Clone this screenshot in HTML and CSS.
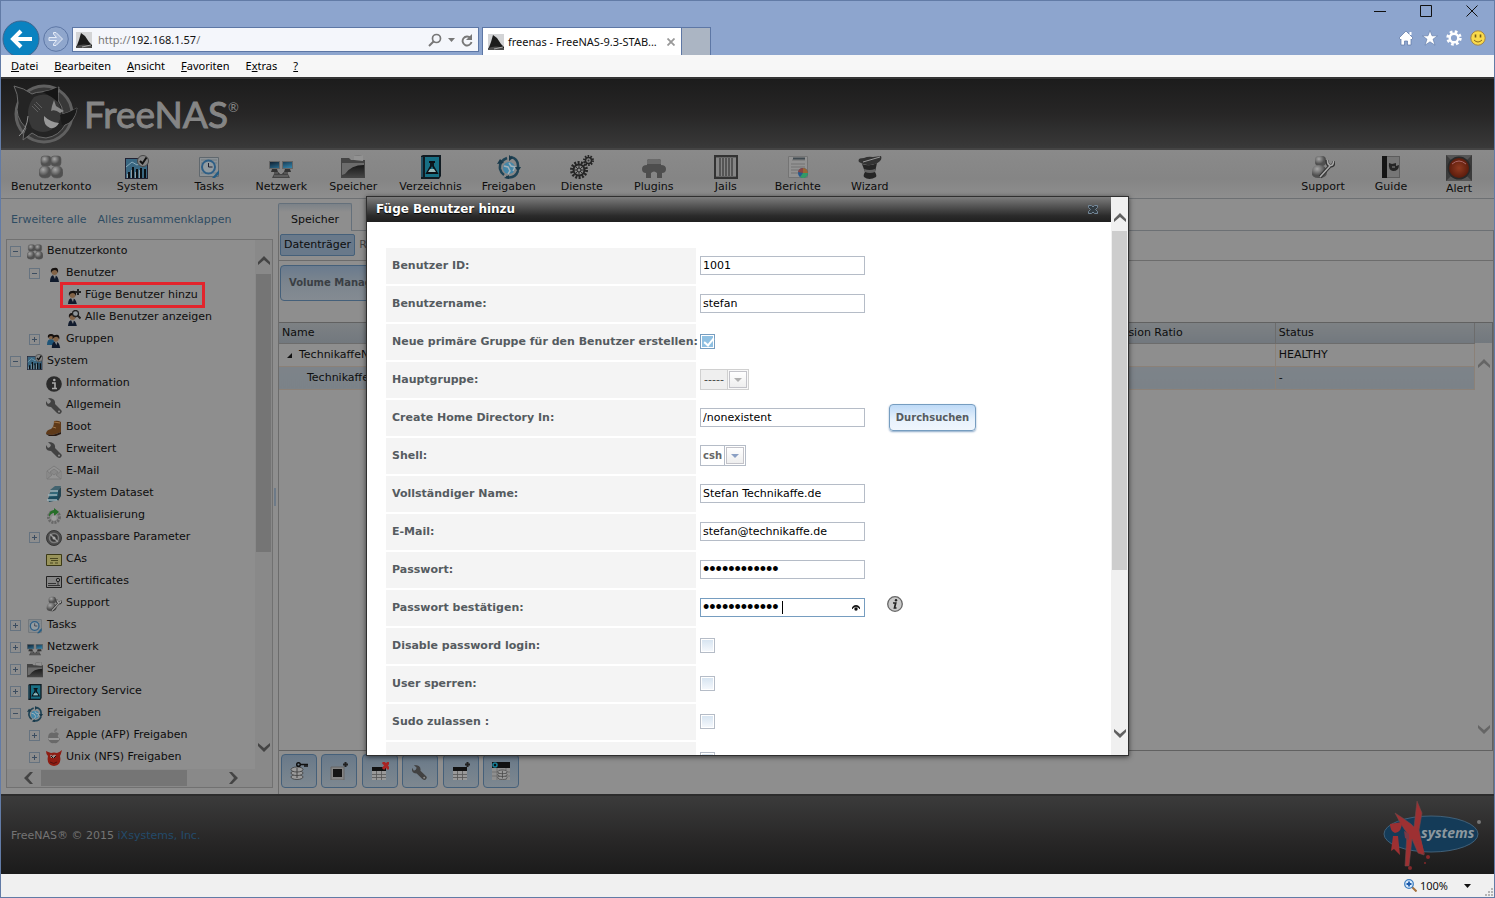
FILE: index.html
```html
<!DOCTYPE html>
<html lang="de">
<head>
	<meta charset="utf-8">
	<title>freenas - FreeNAS-9.3-STABLE</title>
	<link rel="stylesheet" href="styles.css">
</head>
<body>
	<!-- icons -->
	<svg class="defs" width="0" height="0">
		<defs>
			<linearGradient id="gGrey" x1="0" y1="0" x2="1" y2="1"><stop offset="0" stop-color="#a0a0a0"/><stop offset="1" stop-color="#333"/></linearGradient>
			<linearGradient id="gBlue" x1="0" y1="0" x2="1" y2="1"><stop offset="0" stop-color="#123"/><stop offset="1" stop-color="#3385ad"/></linearGradient>
			<linearGradient id="gFolder" x1="0" y1="0" x2="0" y2="1"><stop offset="0" stop-color="#111"/><stop offset="1" stop-color="#444"/></linearGradient>
			<radialGradient id="gLamp"><stop offset="0" stop-color="#8f3a20"/><stop offset="1" stop-color="#5c1c0c"/></radialGradient>
			<radialGradient id="gBody" cx=".35" cy=".3"><stop offset="0" stop-color="#a6a6a6"/><stop offset="1" stop-color="#505050"/></radialGradient>
		</defs>
		<symbol id="i-users" viewBox="0 0 24 24">
			<g fill="url(#gBody)" stroke="#555" stroke-width=".6">
				<rect x="2" y="1" width="10" height="10" rx="3"/><rect x="12" y="1" width="10" height="10" rx="3"/>
				<path d="M0 18q0-7 6-7t6 7q0 5-6 5t-6-5z"/><path d="M12 18q0-7 6-7t6 7q0 5-6 5t-6-5z"/>
			</g>
		</symbol>
		<symbol id="i-system" viewBox="0 0 24 24">
			<rect x=".5" y="3.5" width="22" height="20" fill="#3a6781" stroke="#223"/>
			<path d="M1 12l6-5 5 3 9-5" stroke="#8ab" fill="none"/>
			<path d="M3 23v-6h2v6zM7 23V12h2v11zM11 23v-9h2v9zM15 23V13h2v10zM19 23v-9h2v9z" fill="#0a0f14"/>
			<path d="M2 23v-4h1v4zM6 23v-8h1v8zM10 23v-6h1v6zM14 23v-8h1v8z" fill="#8d9da5"/>
			<circle cx="18" cy="6" r="5.500" fill="#858585" stroke="#484848"/>
			<path d="M15 6l2.500 2.500 4-6" stroke="#111" stroke-width="2" fill="none"/>
		</symbol>
		<symbol id="i-tasks" viewBox="0 0 24 24">
			<path d="M2.500 2.500h19v19h-19z" fill="#8c9296" stroke="#60686e"/>
			<path d="M4 5h16M4 8h16M4 18h16" stroke="#707a80"/>
			<circle cx="11.500" cy="12" r="6.500" fill="#929ba0" stroke="#2f5f86" stroke-width="2"/>
			<path d="M11.500 8v4h4" stroke="#223" fill="none"/>
			<path d="M15 23l7-8v4l-4 4z" fill="#245d85"/>
		</symbol>
		<symbol id="i-net" viewBox="0 0 24 24">
			<path d="M0 6h11v8H0zM13 6h11v8H13z" fill="#666"/>
			<path d="M1 7h9v6H1zM14 7h9v6h-9z" fill="url(#gBlue)"/>
			<path d="M3 14h5l1 3H2zM16 14h5l1 3h-7z" fill="#333"/>
			<path d="M5 18h5v2M19 18h-5v2" stroke="#222" fill="none"/>
			<path d="M5 19h14l2 4H3z" fill="#444"/><path d="M5 21h14" stroke="#777"/>
		</symbol>
		<symbol id="i-folder" viewBox="0 0 24 24">
			<path d="M0 23V3h8l2 2h3V1l9-1v5h2v18z" fill="#444"/>
			<path d="M13 5V1l9-1v6z" fill="#929292"/>
			<path d="M1 22V8h22v14z" fill="url(#gFolder)"/>
			<path d="M1 20V8h22v2Q10 10 4 19z" fill="#6c6c6c"/>
		</symbol>
		<symbol id="i-book" viewBox="0 0 24 24">
			<path d="M2 1l2-1h18v21l-2 3H2z" fill="#111b22"/>
			<path d="M6 2h14v20H6z" fill="#176f84"/><path d="M3 2v20" stroke="#286176" stroke-width="1.500"/>
			<path d="M10 7h6M12 7v4l-4 7h10l-4-7V7" fill="none" stroke="#0c1117" stroke-width="1.800"/>
			<path d="M11 14h4l2 3H9z" fill="#9bb"/>
		</symbol>
		<symbol id="i-share" viewBox="0 0 24 24">
			<circle cx="12" cy="13" r="6" fill="#4386a8"/><path d="M7 11l4 1 2 4-2 3M12 8l2 3 4 1-2 4" stroke="#a1b1b9" stroke-width="1.500" fill="none"/>
			<path d="M10 3Q2 6 3 14q1 4 4 6M14 2q8 2 7 11M9 22q9 2 12-6" fill="none" stroke="#1f4355" stroke-width="2.500"/>
			<path d="M0 9l3-5 4 4zM12 0v6l4-3zM18 12h6l-3 5zM7 23l5-3v4z" fill="#18394a"/>
		</symbol>
		<symbol id="i-gears" viewBox="0 0 24 24">
			<circle cx="9" cy="15" r="7.500" fill="none" stroke="#252525" stroke-width="3" stroke-dasharray="2 1.370"/>
			<circle cx="9" cy="15" r="5.500" fill="none" stroke="#252525" stroke-width="2"/>
			<path d="M9 10v10M4 15h10M5.500 11.500l7 7M12.500 11.500l-7 7" stroke="#303030"/><circle cx="9" cy="15" r="2" fill="#8b8b8b" stroke="#222"/>
			<circle cx="18.500" cy="5.500" r="4.300" fill="none" stroke="#252525" stroke-width="2.400" stroke-dasharray="1.500 1.200"/>
			<circle cx="18.500" cy="5.500" r="3" fill="none" stroke="#252525" stroke-width="1.500"/><circle cx="18.500" cy="5.500" r="1" fill="#333"/>
		</symbol>
		<symbol id="i-plugin" viewBox="0 0 24 24">
			<path d="M5 10V6q0-2 3-2h8q3 0 3 2v4q5 0 5 4t-4 4v5h-5v-5q-3-3-6 0v5H4v-5q-4 0-4-4t5-4z" fill="#4e4e4e"/>
			<path d="M5 6q0-2 3-2h8q3 0 3 2v3H5z" fill="#6a6a6a"/>
		</symbol>
		<symbol id="i-jail" viewBox="0 0 24 24">
			<path d="M1 1h22v22H1z" fill="#858585" stroke="#333" stroke-width="2"/>
			<path d="M6 3v18M9 3v18M12 3v18M15 3v18M18 3v18" stroke="#3c3c3c" stroke-width="1.300"/><path d="M2 2.500h20M2 21.500h20" stroke="#666"/>
		</symbol>
		<symbol id="i-report" viewBox="0 0 24 24">
			<path d="M2.500 1.500h19v21h-19z" fill="#929292" stroke="#747474"/>
			<path d="M6 5h13M5 9h14M5 12h14M5 15h8M5 18h7" stroke="#727272"/><path d="M7 3.500h12" stroke="#404a50" stroke-width="2"/>
			<circle cx="17" cy="18" r="5" fill="#27598c"/><path d="M17 18v-5a5 5 0 0 1 5 5z" fill="#963"/><path d="M17 18h5a5 5 0 0 1-8 4z" fill="#396"/><path d="M17 18l-5-1a5 5 0 0 1 5-4z" fill="#844"/>
		</symbol>
		<symbol id="i-hat" viewBox="0 0 24 24">
			<path d="M4 9q8 3 15-1l-2 9q2 3 1 5-7 4-12 0-1-2 1-5z" fill="#252525"/>
			<path d="M6 14q6 2 11 0v3q-5 2-10 0z" fill="#646464"/>
			<path d="M1 7q-2-4 5-4 4-2 9-1l8-1q2 5-6 8-9 3-16-2z" fill="#333"/><path d="M5 7L22 2" stroke="#999"/>
		</symbol>
		<symbol id="i-support" viewBox="0 0 24 24">
			<rect x="4" y="1" width="11" height="10" rx="4" fill="url(#gBody)"/><path d="M1 17q0-7 7-7t8 7q0 6-8 6t-7-6z" fill="url(#gBody)"/>
			<path d="M9 22l10-11M16 5q0 5 3 6 4 0 4-5" stroke="#333" stroke-width="3.500" fill="none"/><path d="M9 22l10-11M16.500 5q0 5 3 5.500 3 0 3-4.500" stroke="#aaa" stroke-width="1.600" fill="none"/>
		</symbol>
		<symbol id="i-guide" viewBox="0 0 24 24">
			<path d="M3 1h18v22H3z" fill="#5c5c5c"/><path d="M3 1h5v22H3z" fill="#151515"/><path d="M8 2h12v20H8z" fill="#767676"/>
			<path d="M10 8l3 1 4-1v3l3-1q0 6-6 6-5-1-4-8z" fill="#252525"/><path d="M13 12h3" stroke="#888"/>
		</symbol>
		<symbol id="i-alert" viewBox="0 0 26 26">
			<path d="M0 0h26v26H0z" fill="#3b3b3b"/><path d="M0 0l13 13L26 0zM0 26l13-13 13 13z" fill="#555"/>
			<circle cx="13" cy="13" r="11.500" fill="#292929"/><circle cx="13" cy="13" r="10" fill="url(#gLamp)"/><path d="M6 9q7-6 14 0" stroke="#a66" fill="none"/>
		</symbol>
		<symbol id="i-user" viewBox="0 0 16 16">
			<path d="M4 16q0-7 4-7t5 7z" fill="#101a2c"/><path d="M7 9h3l-1 4z" fill="#888"/><circle cx="8.500" cy="6" r="3" fill="#826347"/><path d="M5 7q-1-5 3-5 5-1 4 5-1-3-3-3Q6 4 5 7z" fill="#15100e"/>
		</symbol>
		<symbol id="i-user-add" viewBox="0 0 16 16">
			<use href="#i-user" x="-1" y="1" width="16" height="16"/><path d="M13 1v6M10 4h6" stroke="#222" stroke-width="2"/>
		</symbol>
		<symbol id="i-user-find" viewBox="0 0 16 16">
			<use href="#i-user" x="-1" y="1" width="16" height="16"/><circle cx="10.500" cy="3.500" r="3" fill="#8d9499" stroke="#222" stroke-width="1.300"/><path d="M12.500 5.500l3 3" stroke="#222" stroke-width="2"/>
		</symbol>
		<symbol id="i-group" viewBox="0 0 16 16">
			<path d="M1 13q0-6 4-6t4 6z" fill="#1f5578"/><circle cx="5" cy="5" r="2.500" fill="#826347"/><path d="M2 6q-1-4 3-4t3 4Q5 2 2 6z" fill="#15100e"/>
			<use href="#i-user" x="2" y="1" width="15" height="15"/>
		</symbol>
		<symbol id="i-info" viewBox="0 0 16 16">
			<circle cx="8" cy="8" r="7.800" fill="#2b2b2b"/><path d="M6 7h3v5M6 12.500h5" stroke="#aaa" stroke-width="1.600" fill="none"/><circle cx="8.300" cy="4" r="1.300" fill="#aaa"/>
		</symbol>
		<symbol id="i-wrench" viewBox="0 0 16 16">
			<path d="M2 0l3 3-1 2-2 1-2-3q-1 6 5 6l6 6q3 2 4 0 2-2-1-4L9 6q1-6-7-6z" fill="#424242"/><circle cx="13" cy="13.500" r="1" fill="#909090"/>
		</symbol>
		<symbol id="i-boot" viewBox="0 0 16 16">
			<path d="M8 1q4-1 7 1v10l-5 2-4 1-6-1q0-4 5-5 3-2 3-8z" fill="#5f3a19"/><path d="M0 14l6 1 4-1 5-2v2l-5 2H3z" fill="#271810"/><path d="M8 2l6 1M7 7l3 1" stroke="#a17749"/>
		</symbol>
		<symbol id="i-mail" viewBox="0 0 16 16">
			<path d="M1 7l7-5 7 5v8H1z" fill="#939393" stroke="#7c7c7c"/><path d="M1 7l5 4-5 4M15 7l-5 4 5 4M4 8l4-3 4 3-4 3z" fill="#898989" stroke="#7c7c7c"/>
		</symbol>
		<symbol id="i-dataset" viewBox="0 0 16 16">
			<path d="M2 12l4-3h9l-3 5-9 2z" fill="#1c4b5d"/><path d="M3 8l4-3h8l-3 5-9 1z" fill="#31687a"/><path d="M4 4l5-4h6l-2 5-9 2z" fill="#42636f"/><path d="M1 14h10M2 9h9M4 5h8" stroke="#9cb3bb" stroke-width="1.400"/><path d="M12 15V5l3-4v9z" fill="#244451"/>
		</symbol>
		<symbol id="i-update" viewBox="0 0 16 16">
			<circle cx="8" cy="9" r="5.500" fill="#8e8e8e" stroke="#686868" stroke-width="3" stroke-dasharray="2 1"/><path d="M3 9q-1-6 5-7V0l5 4-5 4V5q-3 0-5 4z" fill="#286f2a"/><circle cx="8" cy="10" r="2.500" fill="#a0a0a0"/>
		</symbol>
		<symbol id="i-dial" viewBox="0 0 16 16">
			<circle cx="8" cy="8" r="7.500" fill="#4c4c4c" stroke="#373737"/><circle cx="8" cy="8" r="4.500" fill="#383838" stroke="#7a7a7a" stroke-width="1.500"/><path d="M4 4l8 8" stroke="#999" stroke-width="1.500"/><circle cx="8" cy="8" r="1.500" fill="#aaa"/>
		</symbol>
		<symbol id="i-ca" viewBox="0 0 16 16"><path d="M.5 2.500h15v11H.5z" fill="#98935a" stroke="#3b3916"/><path d="M4 6.500h8M5 8.500h7M4 11h3M9 11h3" stroke="#484620"/></symbol>
		<symbol id="i-cert" viewBox="0 0 16 16"><path d="M.5 2.500h15v11H.5z" fill="#858585" stroke="#222"/><circle cx="12" cy="6" r="1.700" fill="none" stroke="#222"/><path d="M2 9.500h8M12 8v3M2 11.500h12" stroke="#333"/></symbol>
		<symbol id="i-apple" viewBox="0 0 16 16"><path d="M8 5q3-2 5 1-3 2 1 5-2 5-6 4-4 1-6-4 0-8 6-6z" fill="#696969"/><path d="M8 4q0-3 3-4 1 3-3 4z" fill="#747474"/><path d="M2 10h11v2H3z" fill="#999"/></symbol>
		<symbol id="i-devil" viewBox="0 0 16 16"><path d="M0 1q2 1 5 2 3-1 6 0 3-1 5-3-1 4-2 6 2 9-6 10-8-1-6-10Q0 4 0 1z" fill="#8e1c12"/><path d="M4 5q2-1 2 1 2-2 4-1l-1 3H5z" fill="#a08a85"/><path d="M5 6l2 2M10 6L8 8" stroke="#111"/><path d="M4 12q4 3 7 0" stroke="#511" fill="none"/></symbol>
		<symbol id="i-fin" viewBox="0 0 16 16"><path d="M0 0h16v16H0z" fill="#d3d4d6"/><path d="M5 1l4 3 4 6 3 3v3H0l3-8z" fill="#1c1c1c"/><path d="M0 14q8-3 16 0v2H0z" fill="#4d4d4d"/><path d="M6 15l9-2" stroke="#aaa"/></symbol>
		<symbol id="i-up" viewBox="0 0 12 10"><path d="M0 9V6l6-6 6 6v3L6 4z" fill="currentColor"/></symbol>
		<symbol id="i-down" viewBox="0 0 12 10"><path d="M0 1v3l6 6 6-6V1L6 6z" fill="currentColor"/></symbol>
		<symbol id="i-left" viewBox="0 0 10 12"><path d="M9 0H6L0 6l6 6h3L4 6z" fill="currentColor"/></symbol>
		<symbol id="i-right" viewBox="0 0 10 12"><path d="M1 0h3l6 6-6 6H1l5-6z" fill="currentColor"/></symbol>
		<symbol id="i-disks" viewBox="0 0 18 18">
			<g fill="#9a9a9a" stroke="#3c3c3c" stroke-width=".8"><ellipse cx="7" cy="15" rx="6" ry="2.500"/><ellipse cx="7" cy="11" rx="6" ry="2.500"/><ellipse cx="7" cy="7.500" rx="6" ry="2.500"/></g><path d="M7 6v10" stroke="#444"/>
		</symbol>
		<symbol id="i-grid" viewBox="0 0 18 18"><path d="M1 5h14v4H1z" fill="#111"/><path d="M1 9h14v9H1z" fill="#999"/><path d="M1 12.500h14M1 15.500h14M5.500 9v9M10.500 9v9" stroke="#555" stroke-width=".8"/></symbol>
	</svg>

	<!-- browser window -->
	<header class="titlebar">
		<button class="back" aria-label="Zurück"><svg viewBox="0 0 38 38" width="38" height="38"><circle cx="19" cy="19" r="18" fill="#0a82c0" stroke="#3e6590"/><path d="M30 19H12M19 11l-8 8 8 8" stroke="#fff" stroke-width="4" fill="none"/></svg></button>
		<button class="forward" aria-label="Vorwärts"><svg viewBox="0 0 26 26" width="26" height="26"><circle cx="13" cy="13" r="12.300" fill="#8fa6cc" stroke="#5d77a5"/><path d="M6 11.500h7.500L10.500 8V6.500H13l6.500 6.500-6.500 6.500h-2.500V18l3-3.500H6z" fill="#a9bbdb" stroke="#e5ecf7"/></svg></button>
		<div class="address">
			<svg class="fin" width="16" height="16"><use href="#i-fin"/></svg>
			<div class="url">http://<b>192.168.1.57</b>/</div>
			<button aria-label="Suchen"><svg viewBox="0 0 14 14" width="14" height="14"><circle cx="8.500" cy="5.500" r="4" fill="none" stroke="#777" stroke-width="1.700"/><path d="M5.500 8.500L1 13" stroke="#777" stroke-width="2"/></svg></button>
			<svg viewBox="0 0 7 4" width="7" height="4"><path d="M0 0h7L3.500 4z" fill="#777"/></svg>
			<button aria-label="Aktualisieren"><svg viewBox="0 0 12 14" width="12" height="14"><path d="M9.500 5A4.500 4.500 0 1 0 10.500 9" fill="none" stroke="#777" stroke-width="1.900"/><path d="M11 1v6H5z" fill="#777"/></svg></button>
		</div>
		<div class="tab">
			<svg class="fin" width="16" height="16"><use href="#i-fin"/></svg>
			<span>freenas - FreeNAS-9.3-STAB...</span>
			<button aria-label="Tab schließen"><svg viewBox="0 0 8 8" width="8" height="8"><path d="M.5.5l7 7M7.500.5l-7 7" stroke="#999" stroke-width="1.800"/></svg></button>
		</div>
		<button class="newtab" aria-label="Neuer Tab"></button>
		<div class="window-side">
			<div class="window-buttons">
				<button aria-label="Minimieren"><svg width="12" height="12"><path d="M0 6.500h12" stroke="#111"/></svg></button>
				<button aria-label="Maximieren"><svg width="12" height="12"><path d="M.5.5h11v11H.5z" stroke="#111" fill="none"/></svg></button>
				<button aria-label="Schließen"><svg width="12" height="12"><path d="M.5.5l11 11M11.500.5l-11 11" stroke="#111"/></svg></button>
			</div>
			<div class="window-tools">
				<button aria-label="Startseite"><svg viewBox="0 0 16 16" width="16" height="16"><path d="M8 1l7 7-1.500 1.500L13 9v6H9.500v-4h-3v4H3V9l-.5.500L1 8z" fill="#fff" stroke="#5d77a5" stroke-width=".7"/><path d="M12.500 2v3" stroke="#fff" stroke-width="2"/></svg></button>
				<button aria-label="Favoriten"><svg viewBox="0 0 16 16" width="16" height="16"><path d="M8 .5l2 5.300h5.500L11 9.200l2 6L8 11.800l-5 3.400 2-6L.5 5.800H6z" fill="#fff" stroke="#5d77a5" stroke-width=".6"/></svg></button>
				<button aria-label="Extras"><svg viewBox="0 0 16 16" width="16" height="16"><circle cx="8" cy="8" r="6.200" fill="none" stroke="#fff" stroke-width="3" stroke-dasharray="2.600 2.270"/><circle cx="8" cy="8" r="4.300" fill="none" stroke="#fff" stroke-width="2.400"/></svg></button>
				<button aria-label="Feedback"><svg viewBox="0 0 16 16" width="16" height="16"><circle cx="8" cy="8" r="7.200" fill="#f9da4a" stroke="#a3864a"/><path d="M5.500 4.500v3M10.500 4.500v3" stroke="#755b13" stroke-width="1.600"/><path d="M4 10q4 4 8 0" stroke="#8a6b1b" fill="none"/></svg></button>
			</div>
		</div>
	</header>
	<nav class="menubar">
		<a href="#"><u>D</u>atei</a><a href="#"><u>B</u>earbeiten</a><a href="#"><u>A</u>nsicht</a><a href="#"><u>F</u>avoriten</a><a href="#">E<u>x</u>tras</a><a href="#"><u>?</u></a>
	</nav>

	<div class="page">
		<div class="banner">
			<svg class="mascot" viewBox="0 0 66 62" width="66" height="62">
				<circle cx="32" cy="31" r="28" fill="#383838" stroke="#606060" stroke-width="3"/>
				<path d="M2 3q10 2 18 8 4-2 9-2 9-1 18-5-1 7-1 13 5 7 5 14 8-2 14-6-2 14-12 17-6 11-19 13-8 0-14-5l-9 7q0-7 3-12Q2 33 6 20 6 11 2 3z" fill="#242424" stroke="#6a6a6a"/>
				<path d="M22 14q14-7 24 5 8 15-4 26-11 8-22 0-9-17 2-31z" fill="#383838"/>
				<path d="M46 4q-8 4-15 5 8 4 15 10z" fill="#151515"/>
				<path d="M42 17l2 6 8 5-4 2q-5-4-9-2l1-5z" fill="#878787"/>
				<path d="M32 33q6 6 15 7-3 6-9 5-7-3-6-12z" fill="#999"/>
				<path d="M48 32q9-2 17-7-3 15-15 17z" fill="#1a1a1a"/>
				<path d="M7 53q8-7 9-20" stroke="#909090" fill="none"/>
				<path d="M20 23l6 6M22 21l6 6M24 19l6 6" stroke="#606060"/>
			</svg>
			<div class="brand">FreeNAS<sup>®</sup></div>
		</div>

		<nav class="toolbar">
			<a href="#"><svg><use href="#i-users"/></svg>Benutzerkonto</a>
			<a href="#"><svg><use href="#i-system"/></svg>System</a>
			<a href="#"><svg><use href="#i-tasks"/></svg>Tasks</a>
			<a href="#"><svg><use href="#i-net"/></svg>Netzwerk</a>
			<a href="#"><svg><use href="#i-folder"/></svg>Speicher</a>
			<a href="#"><svg><use href="#i-book"/></svg>Verzeichnis</a>
			<a href="#"><svg><use href="#i-share"/></svg>Freigaben</a>
			<a href="#"><svg><use href="#i-gears"/></svg>Dienste</a>
			<a href="#"><svg><use href="#i-plugin"/></svg>Plugins</a>
			<a href="#"><svg><use href="#i-jail"/></svg>Jails</a>
			<a href="#"><svg><use href="#i-report"/></svg>Berichte</a>
			<a href="#"><svg><use href="#i-hat"/></svg>Wizard</a>
			<div class="toolbar-right">
				<a href="#"><svg><use href="#i-support"/></svg>Support</a>
				<a href="#"><svg><use href="#i-guide"/></svg>Guide</a>
				<a href="#" class="alert"><svg><use href="#i-alert"/></svg>Alert</a>
			</div>
		</nav>

		<div class="main">
			<aside class="sidebar">
				<div class="tree-links"><a href="#">Erweitere alle</a><a href="#">Alles zusammenklappen</a></div>
				<div class="tree-box">
					<div class="tree-view">
						<ul class="tree">
							<li><i class="ex minus"></i><svg><use href="#i-users"/></svg>Benutzerkonto</li>
							<li class="l1"><i class="ex minus"></i><svg><use href="#i-user"/></svg>Benutzer</li>
							<li class="l2 marked"><i class="ex none"></i><svg><use href="#i-user-add"/></svg>Füge Benutzer hinzu</li>
							<li class="l2"><i class="ex none"></i><svg><use href="#i-user-find"/></svg>Alle Benutzer anzeigen</li>
							<li class="l1"><i class="ex plus"></i><svg><use href="#i-group"/></svg>Gruppen</li>
							<li><i class="ex minus"></i><svg><use href="#i-system"/></svg>System</li>
							<li class="l1"><i class="ex none"></i><svg><use href="#i-info"/></svg>Information</li>
							<li class="l1"><i class="ex none"></i><svg><use href="#i-wrench"/></svg>Allgemein</li>
							<li class="l1"><i class="ex none"></i><svg><use href="#i-boot"/></svg>Boot</li>
							<li class="l1"><i class="ex none"></i><svg><use href="#i-wrench"/></svg>Erweitert</li>
							<li class="l1"><i class="ex none"></i><svg><use href="#i-mail"/></svg>E-Mail</li>
							<li class="l1"><i class="ex none"></i><svg><use href="#i-dataset"/></svg>System Dataset</li>
							<li class="l1"><i class="ex none"></i><svg><use href="#i-update"/></svg>Aktualisierung</li>
							<li class="l1"><i class="ex plus"></i><svg><use href="#i-dial"/></svg>anpassbare Parameter</li>
							<li class="l1"><i class="ex none"></i><svg><use href="#i-ca"/></svg>CAs</li>
							<li class="l1"><i class="ex none"></i><svg><use href="#i-cert"/></svg>Certificates</li>
							<li class="l1"><i class="ex none"></i><svg><use href="#i-support"/></svg>Support</li>
							<li><i class="ex plus"></i><svg><use href="#i-tasks"/></svg>Tasks</li>
							<li><i class="ex plus"></i><svg><use href="#i-net"/></svg>Netzwerk</li>
							<li><i class="ex plus"></i><svg><use href="#i-folder"/></svg>Speicher</li>
							<li><i class="ex plus"></i><svg><use href="#i-book"/></svg>Directory Service</li>
							<li><i class="ex minus"></i><svg><use href="#i-share"/></svg>Freigaben</li>
							<li class="l1"><i class="ex plus"></i><svg><use href="#i-apple"/></svg>Apple (AFP) Freigaben</li>
							<li class="l1"><i class="ex plus"></i><svg><use href="#i-devil"/></svg>Unix (NFS) Freigaben</li>
						</ul>
						<div class="vscroll">
							<svg class="arr"><use href="#i-up"/></svg>
							<div class="track"><div class="thumb"></div></div>
							<svg class="arr"><use href="#i-down"/></svg>
						</div>
					</div>
					<div class="hscroll">
						<svg class="arr"><use href="#i-left"/></svg>
						<div class="track"><div class="thumb"></div></div>
						<svg class="arr"><use href="#i-right"/></svg>
					</div>
				</div>
			</aside>
			<div class="splitter"><i></i></div>

			<section class="content">
				<div class="tabs"><a href="#" class="tab-on">Speicher</a></div>
				<div class="pane">
					<div class="subtabs"><a href="#" class="sub-on">Datenträger</a><a href="#">R</a></div>
					<div class="actions"><button class="btn">Volume Manager</button></div>
					<div class="grid">
						<div class="grid-table">
							<table>
								<thead><tr><th>Name</th><th>Used</th><th>Available</th><th>Compression</th><th>Compression Ratio</th><th>Status</th></tr></thead>
								<tbody>
									<tr><td><svg class="twisty" viewBox="0 0 5 5" width="5" height="5"><path d="M5 0v5H0z" fill="#111"/></svg>TechnikaffeNAS</td><td></td><td></td><td></td><td></td><td>HEALTHY</td></tr>
									<tr class="odd"><td class="child">TechnikaffeNAS</td><td></td><td></td><td></td><td></td><td>-</td></tr>
								</tbody>
							</table>
						</div>
						<div class="grid-scroll">
							<div class="corner"></div>
							<svg class="arr"><use href="#i-up"/></svg>
							<div class="track"></div>
							<svg class="arr"><use href="#i-down"/></svg>
						</div>
					</div>
					<div class="grid-buttons">
						<button aria-label="Disks"><svg viewBox="0 0 18 18"><use href="#i-disks"/><circle cx="8.500" cy="2.500" r="1.800" fill="none" stroke="#111" stroke-width="1.500"/><path d="M10 2.500h8M15 3v2M17 3v2" stroke="#111" stroke-width="1.500"/></svg></button>
						<button aria-label="Snapshot"><svg viewBox="0 0 18 18"><path d="M1 5h13v13H1z" fill="#858585" stroke="#666"/><path d="M3 7h9v8H3z" fill="#151515"/><path d="M15.500 0v5M13 2.500h5" stroke="#222" stroke-width="2"/></svg></button>
						<button aria-label="Löschen"><svg viewBox="0 0 18 18"><use href="#i-grid"/><path d="M12 0l6 7M18 0l-6 7" stroke="#a92424" stroke-width="3"/></svg></button>
						<button aria-label="Bearbeiten"><svg viewBox="0 0 18 18"><use href="#i-wrench" x="1" y="3" width="15" height="15"/></svg></button>
						<button aria-label="Dataset anlegen"><svg viewBox="0 0 18 18"><use href="#i-grid"/><path d="M15.500 0v5M13 2.500h5" stroke="#222" stroke-width="2"/></svg></button>
						<button aria-label="Zvol anlegen"><svg viewBox="0 0 18 18"><path d="M0 0h18v6H0z" fill="#111"/><path d="M0 6h18v12H0z" fill="#8f8f8f"/><path d="M0 10h18M0 14h18M5 6v12M14 6v12" stroke="#666" stroke-width=".7"/><use href="#i-disks" x="5" y="4" width="14" height="14"/><circle cx="3" cy="3" r="2" fill="none" stroke="#15809a" stroke-width="1.500"/></svg></button>
					</div>
				</div>
			</section>
		</div>

		<footer class="footer">
			<p>FreeNAS® © 2015 <a href="#">iXsystems, Inc.</a></p>
			<svg viewBox="0 0 100 70" width="100" height="70">
				<ellipse cx="48" cy="33" rx="47" ry="18" fill="#143b58" stroke="#416078"/>
				<path d="M12 12q8 5 16 11l3 3L34 0l5 12-3 17 5 25-6-2-6-14-3 27h-4l2-33q-6-8-12-20z" fill="#9d3032" stroke="#70484a" stroke-width=".6"/>
				<path d="M33 20l9 34-9-15z" fill="#9d3032"/>
				<path d="M7 23l12-2q0 10-7 11-5-2-5-9zM10 35h5l2 19-6-6-3 2z" fill="#9d3032"/>
				<path d="M21 30l5 3v6l-4-2z" fill="#7b3946"/><circle cx="45" cy="56" r="2" fill="#84282a"/><circle cx="27" cy="67" r="2" fill="#84282a"/><circle cx="42" cy="62" r="1" fill="#84282a"/>
				<text x="38" y="37" class="ix-text">systems</text>
				<circle cx="96" cy="21" r="2" fill="#777"/>
			</svg>
		</footer>

		<!-- dialog -->
		<div class="modal">
			<div class="dialog" role="dialog" aria-labelledby="dlg-title">
				<div class="dialog-main">
					<div class="dialog-title">
						<h1 id="dlg-title">Füge Benutzer hinzu</h1>
						<button aria-label="Schließen"><svg viewBox="0 0 10 9" width="10" height="9"><path d="M.5.5h3L5 2 6.500.5h3v2l-2 2 2 2v2h-3L5 7 3.500 8.500h-3v-2l2-2-2-2z" fill="#333c42" stroke="#74889a"/></svg></button>
					</div>
					<form class="form">
						<div class="field"><label for="uid">Benutzer ID:</label><input type="text" id="uid" value="1001"></div>
						<div class="field"><label for="uname">Benutzername:</label><input type="text" id="uname" value="stefan"></div>
						<div class="field"><label for="newgroup">Neue primäre Gruppe für den Benutzer erstellen:</label><input type="checkbox" id="newgroup" checked></div>
						<div class="field"><label for="group">Hauptgruppe:</label><div class="dropdown disabled"><select id="group" disabled><option>-----</option></select><span><i></i></span></div></div>
						<div class="field"><label for="home">Create Home Directory In:</label><input type="text" id="home" value="/nonexistent"><button type="button" class="btn browse">Durchsuchen</button></div>
						<div class="field"><label for="shell">Shell:</label><div class="dropdown"><select id="shell"><option>csh</option></select><span><i></i></span></div></div>
						<div class="field"><label for="fullname">Vollständiger Name:</label><input type="text" id="fullname" value="Stefan Technikaffe.de"></div>
						<div class="field"><label for="mail">E-Mail:</label><input type="text" id="mail" value="stefan@technikaffe.de"></div>
						<div class="field"><label for="pw">Passwort:</label><input type="password" id="pw" value="technikaffe1"></div>
						<div class="field"><label for="pw2">Passwort bestätigen:</label>
							<div class="pw-focus"><input type="password" id="pw2" value="technikaffe1"><i class="caret"></i>
								<svg viewBox="0 0 8 6" width="8" height="6"><path d="M0 4q0-3 4-4 4 1 4 4Q4-1 0 4z" fill="#111" stroke="#111" stroke-width=".7"/><circle cx="4" cy="4" r="1.700" fill="#111"/></svg></div>
							<svg class="hint" viewBox="0 0 16 16" width="16" height="16"><circle cx="8" cy="8" r="7.300" fill="#c9c9c9" stroke="#666" stroke-width="1.300"/><path d="M6 7h2.700L7.500 12h2" stroke="#222" stroke-width="1.700" fill="none"/><circle cx="9" cy="4.200" r="1.200" fill="#222"/></svg>
						</div>
						<div class="field"><label for="nopw">Disable password login:</label><input type="checkbox" id="nopw"></div>
						<div class="field"><label for="lock">User sperren:</label><input type="checkbox" id="lock"></div>
						<div class="field"><label for="sudo">Sudo zulassen :</label><input type="checkbox" id="sudo"></div>
						<div class="field"><label for="samba">&nbsp;</label><input type="checkbox" id="samba" aria-label="Microsoft Account"></div>
					</form>
				</div>
				<div class="vscroll light">
					<svg class="arr"><use href="#i-up"/></svg>
					<div class="track"><div class="thumb"></div></div>
					<svg class="arr"><use href="#i-down"/></svg>
				</div>
			</div>
		</div>
	</div>

	<div class="statusbar">
		<button class="zoom"><svg viewBox="0 0 13 13" width="13" height="13"><path d="M8 8l4.500 4.500" stroke="#a5703c" stroke-width="2"/><circle cx="5" cy="5" r="4.300" fill="#dcecfb" stroke="#3f7fc1" stroke-width="1.300"/><path d="M5 2.500v5M2.500 5h5" stroke="#1d5bab" stroke-width="1.800"/></svg>100%<svg viewBox="0 0 7 4" width="7" height="4"><path d="M0 0h7L3.500 4z" fill="#111"/></svg></button>
		<svg class="grip" viewBox="0 0 9 9" width="9" height="9"><path d="M6 0h2v2H6zM6 3h2v2H6zM3 3h2v2H3zM6 6h2v2H6zM3 6h2v2H3zM0 6h2v2H0z" fill="#b5b5b5"/></svg>
	</div>
</body>
</html>
```

FILE: styles.css
```css
*{
	box-sizing: border-box;
	margin: 0;
	padding: 0;
}
body{
	display: flex;
	flex-direction: column;
	height: 100vh;
	border: 1px solid #627ba6;
	background: #8e8e8e;
	color: #0d0d0d;
	font: 11px/14px "DejaVu Sans", Verdana, sans-serif;
	overflow: hidden;
}
a{
	color: inherit;
	text-decoration: none;
}
button{
	border: 0;
	background: none;
	font: inherit;
	color: inherit;
}
svg{
	display: block;
	flex: none;
}
.defs{
	position: absolute;
}

/* browser */
.titlebar{
	display: flex;
	flex: none;
	align-items: flex-end;
	height: 54px;
	padding-left: 1px;
	background: #8da5ce;
	font: 12px/16px "Noto Sans", sans-serif;
	color: #111;
	overflow: hidden;
}
.back{
	height: 35px;
	margin-right: 3px;
}
.forward{
	margin-right: 3px;
	margin-bottom: 3px;
}
.address{
	display: flex;
	align-items: center;
	width: 407px;
	height: 25px;
	margin: 0 3px 3px 0;
	padding: 0 5px 0 3px;
	gap: 6px;
	border: 1px solid #5d77a5;
	background: #f4f6fb;
	font-size: 11px;
}
.url{
	flex: 1;
	color: #777;
}
.url b{
	font-weight: normal;
	color: #111;
}
.tab{
	display: flex;
	align-items: center;
	gap: 4px;
	width: 200px;
	height: 28px;
	padding: 0 6px 0 5px;
	border: 1px solid #5d77a5;
	border-bottom: 0;
	background: #fff;
	font-size: 11px;
	white-space: nowrap;
}
.tab span{
	flex: 1;
}
.newtab{
	width: 29px;
	height: 28px;
	border: 1px solid #5d77a5;
	border-width: 1px 1px 0 0;
	background: #abb5c3;
}
.window-side{
	display: flex;
	flex-direction: column;
	align-items: flex-end;
	align-self: stretch;
	margin-left: auto;
	padding: 4px 8px 0 0;
	gap: 13px;
}
.window-buttons{
	display: flex;
	gap: 34px;
	padding-right: 8px;
}
.window-buttons button, .window-tools button{
	display: block;
}
.window-tools{
	display: flex;
	gap: 8px;
}
.menubar{
	display: flex;
	flex: none;
	gap: 16px;
	height: 22px;
	padding: 2px 10px;
	background: #f7f7f7;
	color: #000;
	font: 11px/18px "Noto Sans", sans-serif;
}

/* page */
.page{
	position: relative;
	display: flex;
	flex: 1;
	flex-direction: column;
	min-height: 0;
}
.banner{
	display: flex;
	flex: none;
	align-items: center;
	gap: 6px;
	height: 71px;
	padding: 0 11px;
	border-top: 2px solid #353535;
	background: linear-gradient(#1c1c1c, #272626 50%, #393939);
}
.brand{
	color: #858585;
	font: 37px/42px Lato, sans-serif;
	-webkit-text-stroke: 1px #858585;
}
.brand sup{
	font-size: 13px;
	line-height: 13px;
	vertical-align: 16px;
	-webkit-text-stroke: 0;
}
.toolbar{
	display: flex;
	flex: none;
	height: 51px;
	border-top: 2px solid #444;
	border-bottom: 1px solid #6d7073;
	background: linear-gradient(#8a8a8a, #858585 60%, #8e8e8e);
}
.toolbar a{
	display: flex;
	flex-direction: column;
	align-items: center;
	min-width: 72px;
	padding: 5px 10px 0;
}
.toolbar svg{
	width: 24px;
	height: 24px;
	margin-bottom: 1px;
}
.toolbar-right{
	display: flex;
	margin-left: auto;
	padding-right: 1px;
}
.toolbar-right a{
	min-width: 68px;
}
.toolbar .alert svg{
	width: 26px;
	height: 26px;
}
.main{
	display: flex;
	flex: 1;
	min-height: 0;
}
.sidebar{
	display: flex;
	flex-direction: column;
	width: 272px;
	padding: 0 0 6px 5px;
}
.tree-links{
	display: flex;
	flex: none;
	gap: 11px;
	height: 40px;
	padding: 14px 5px;
	color: #2e4c62;
}
.tree-box{
	display: flex;
	flex: 1;
	flex-direction: column;
	min-height: 0;
	border: 1px solid #717171;
}
.tree-view{
	display: flex;
	flex: 1;
	min-height: 0;
}
.tree{
	flex: 1;
	list-style: none;
	overflow: hidden;
	white-space: nowrap;
}
.tree li{
	display: flex;
	align-items: center;
	width: max-content;
	height: 22px;
	padding: 0 4px 0 3px;
}
.tree svg{
	width: 16px;
	height: 16px;
	margin: 2px 4px 0 0;
}
.tree .l1{
	padding-left: 22px;
}
.tree .l2{
	padding-left: 41px;
}
/* frame drawn round one entry */
.tree .marked{
	height: 26px;
	margin: -2px 0 -2px 53px;
	padding-left: 2px;
	border: 3px solid #e3242c;
}
.marked .ex{
	display: none;
}
.ex{
	position: relative;
	width: 11px;
	height: 11px;
	margin-right: 6px;
	border: 1px solid #667380;
}
.ex::before, .plus::after{
	content: "";
	position: absolute;
	top: 4px;
	left: 2px;
	width: 5px;
	height: 1px;
	background: #3c4d60;
}
.plus::after{
	transform: rotate(90deg);
}
.none{
	visibility: hidden;
}
.vscroll{
	display: flex;
	flex: none;
	flex-direction: column;
	align-items: center;
	width: 17px;
	background: #898989;
	color: #444;
}
.vscroll .arr{
	width: 12px;
	height: 10px;
	margin: 16px 0 8px;
}
.vscroll .track{
	flex: 1;
	align-self: stretch;
	padding: 0 1px;
}
.vscroll .track + .arr{
	margin: 12px 0 17px;
}
.vscroll .thumb{
	height: 61%;
	background: #757575;
}
.hscroll{
	display: flex;
	align-items: center;
	height: 18px;
	padding-right: 34px;
	background: #898989;
	color: #444;
}
.hscroll .arr{
	width: 10px;
	height: 12px;
	margin: 0 7px 0 17px;
}
.hscroll .track + .arr{
	margin: 0;
}
.hscroll .track{
	flex: 1;
	height: 16px;
}
.hscroll .thumb{
	width: 78%;
	height: 16px;
	background: #757575;
}
.splitter{
	display: flex;
	align-items: center;
	width: 5px;
	padding-left: 1px;
}
.splitter i{
	width: 2px;
	height: 18px;
	border: 1px solid #6d7a88;
}

.content{
	display: flex;
	flex: 1;
	flex-direction: column;
	min-width: 0;
	padding-top: 4px;
}
.tabs{
	display: flex;
	height: 28px;
	box-shadow: inset 0 -1px #6c7074;
}
.tab-on{
	padding: 9px 12px 0;
	border: 1px solid #64707b;
	border-bottom: 0;
	border-radius: 2px 2px 0 0;
	background: linear-gradient(#7b8288, #8e8e8e 8px);
}
.pane{
	display: flex;
	flex: 1;
	flex-direction: column;
	min-height: 0;
	border: 1px solid #6c6c6c;
	border-width: 0 1px;
}
.subtabs{
	display: flex;
	align-items: center;
	height: 30px;
	padding: 0 1px 1px;
	border-bottom: 1px solid #6c6c6c;
	color: #444;
}
.subtabs a{
	padding: 3px;
	border: 1px solid transparent;
}
.subtabs .sub-on{
	border-color: #45607a;
	border-radius: 2px;
	background: #69798a;
	color: #0d0d0d;
}
.actions{
	height: 61px;
	padding: 4px 1px;
}
.btn{
	border: 1px solid #45607a;
	border-radius: 4px;
	background: linear-gradient(#6a7b8e, #7c858e 50%, #848b92);
	color: #3a3f44;
	font-weight: bold;
	font-size: 10px;
}
.actions .btn{
	height: 36px;
	padding: 0 8px;
}
.grid{
	display: flex;
	flex: 1;
	border: 1px solid #616161;
	border-left: 0;
}
.grid-table{
	flex: 1;
	min-width: 0;
}
.grid table{
	width: 100%;
	table-layout: fixed;
	border-collapse: collapse;
}
.grid th{
	height: 20px;
	padding: 0 3px;
	border: 1px solid #6c6c6c;
	border-width: 0 1px 1px 0;
	background: linear-gradient(#7d8184, #72787e);
	font-weight: normal;
	text-align: left;
}
.grid td{
	height: 23px;
	padding: 0 3px;
	border: 1px solid #8b8178;
	border-width: 0 1px 1px 0;
}
.grid td:first-child{
	padding-left: 8px;
}
.grid td.child{
	padding-left: 28px;
}
.odd td{
	background: linear-gradient(#7d8389, #7b8288);
}
.twisty{
	display: inline;
	margin-right: 7px;
}
.grid-scroll{
	display: flex;
	flex-direction: column;
	align-items: center;
	width: 17px;
	color: #656565;
}
.corner{
	align-self: stretch;
	height: 20px;
	background: linear-gradient(#7d8184, #72787e);
}
.grid-scroll .arr{
	width: 12px;
	height: 10px;
	margin: 16px 0;
}
.grid-scroll .track{
	flex: 1;
}
.grid-buttons{
	display: flex;
	flex: none;
	justify-content: space-between;
	width: 240px;
	height: 43px;
	padding: 3px 0 6px 2px;
}
.grid-buttons button{
	display: flex;
	align-items: center;
	justify-content: center;
	width: 36px;
	border: 1px solid #45607a;
	border-radius: 4px;
	background: linear-gradient(#697989, #7e8890);
}
.grid-buttons svg{
	width: 18px;
	height: 18px;
}
.footer{
	display: flex;
	flex: none;
	align-items: center;
	justify-content: space-between;
	height: 80px;
	padding: 2px 11px 0 10px;
	border-top: 2px solid #2c2c2c;
	background: linear-gradient(#3b3b3b, #272626 60%, #1b1b1b);
	color: #747474;
}
.footer a{
	color: #234b6b;
}
.ix-text{
	fill: #8c989f;
	font: italic bold 14px "Noto Sans", sans-serif;
}

/* add user dialog */
.modal{
	position: absolute;
	inset: 0;
	display: flex;
	align-items: center;
	justify-content: center;
}
.dialog{
	display: flex;
	width: 763px;
	max-width: 100%;
	height: 560px;
	max-height: 100%;
	border: 1px solid #2f2f2f;
	background: #fff;
	box-shadow: 0 1px 5px rgba(0,0,0,.6);
}
.dialog-main{
	display: flex;
	flex: 1;
	flex-direction: column;
	overflow: hidden;
}
.dialog-title{
	display: flex;
	flex: none;
	align-items: center;
	justify-content: space-between;
	height: 25px;
	padding: 0 13px 0 9px;
	background: linear-gradient(#7c7c7c, #2b2b2b 75%, #1f1f1f);
	color: #fff;
}
.dialog-title h1{
	font-size: 12px;
	text-shadow: 0 1px 1px #000;
}
.form{
	flex: 1;
	padding: 26px 19px 0;
	overflow: hidden;
	color: #555b60;
}
.field{
	display: flex;
	align-items: center;
	height: 36px;
	margin-bottom: 2px;
}
.field label{
	width: 310px;
	height: 36px;
	margin-right: 4px;
	padding-left: 6px;
	background: #f4f4f4;
	font-weight: bold;
	line-height: 36px;
	white-space: nowrap;
}
.field input[type=text], .field input[type=password]{
	width: 165px;
	height: 19px;
	padding: 0 2px;
	border: 1px solid #b5bcc7;
	background: #fff;
	color: #000;
	font: inherit;
}
.field input[type=password]{
	font: 18px/17px "Liberation Sans", Arial, sans-serif;
}
.field input[type=checkbox]{
	width: 15px;
	height: 15px;
	appearance: none;
	border: 1px solid #b5bcc7;
	background: linear-gradient(#d5e3f0, #f6f9fd);
	box-shadow: inset 0 0 0 1px #fff;
}
.field input[type=checkbox]:checked::before{
	content: "";
	display: block;
	width: 4px;
	height: 8px;
	margin: 1px 5px;
	border: solid #fff;
	border-width: 0 2px 2px 0;
	transform: rotate(40deg);
}
.field input[type=checkbox]:checked{
	border-color: #769dc0;
	background: #8fc0e2;
}
.field .browse{
	width: 87px;
	height: 27px;
	margin-left: 24px;
	border-color: #769dc0;
	background: linear-gradient(#bedaf7, #e8f2fc 60%, #f0f6fd);
	box-shadow: 0 1px 2px #8aa8c8;
	color: #555b60;
}
.dropdown{
	display: flex;
	height: 21px;
	border: 1px solid #b5bcc7;
}
.dropdown select{
	padding: 0 2px;
	appearance: none;
	border: 0;
	border-right: 1px solid #b5bcc7;
	background: #fff;
	color: #666;
	font: bold 10px/14px "DejaVu Sans", sans-serif;
}
.dropdown span{
	display: flex;
	align-items: center;
	justify-content: center;
	width: 18px;
	margin: 1px;
	border: 1px solid #c3c3c9;
	background: linear-gradient(#fff, #eee);
}
.dropdown i{
	border: 4px solid transparent;
	border-top-color: #8ba0c4;
	border-bottom: 0;
}
.dropdown.disabled{
	border-color: #d0d0d0;
	background: #f8f8f8;
}
.disabled select{
	padding: 0 3px;
	border-color: #d0d0d0;
	background: #efefef;
	color: #444;
	font-weight: normal;
	font-size: 11px;
	opacity: 1;
}
.disabled i{
	border-top-color: #b0b0b0;
}
.pw-focus{
	position: relative;
}
.field .pw-focus input{
	border-color: #769dc0;
}
.pw-focus input{
	display: block;
}
.pw-focus svg{
	position: absolute;
	top: 7px;
	right: 5px;
}
.caret{
	position: absolute;
	top: 3px;
	left: 82px;
	width: 1px;
	height: 13px;
	background: #000;
}
.hint{
	align-self: flex-start;
	margin: 6px 0 0 22px;
}
.vscroll.light{
	background: #f0f0f0;
	color: #606060;
}
.light .thumb{
	height: 70%;
	background: #cdcdcd;
}

.statusbar{
	display: flex;
	flex: none;
	align-items: center;
	justify-content: flex-end;
	height: 23px;
	background: #f0f0f0;
}
.zoom{
	display: flex;
	align-items: center;
	gap: 3px;
	color: #111;
	font: 11px/16px "Noto Sans", sans-serif;
}
.zoom svg:last-child{
	margin-left: 13px;
}
.grip{
	align-self: flex-end;
	margin-left: 14px;
}
```
